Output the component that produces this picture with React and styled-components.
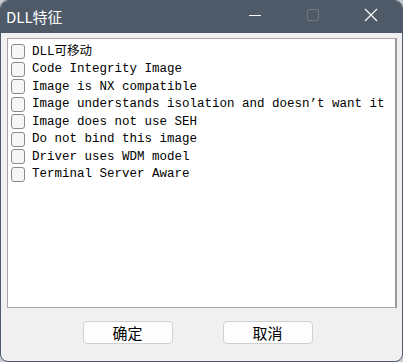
import styled, { createGlobalStyle } from "styled-components";
import { useState } from "react";

const GlobalStyle = createGlobalStyle`
  html, body {
    margin: 0;
    padding: 0;
    background: #c8ccd0;
  }
`;

const flags = [
  "DLL可移动",
  "Code Integrity Image",
  "Image is NX compatible",
  "Image understands isolation and doesn\u2019t want it",
  "Image does not use SEH",
  "Do not bind this image",
  "Driver uses WDM model",
  "Terminal Server Aware",
];

const App = () => {
  const [checked, setChecked] = useState(flags.map(() => false));

  const toggle = (i) => {
    setChecked(checked.map((c, j) => (j === i ? !c : c)));
  };

  return (
    <>
      <GlobalStyle />
      <Window>
        <TitleBar>
          <Title>DLL特征</Title>
          <Controls>
            <CtrlButton>
              <svg width="14" height="14" viewBox="0 0 14 14">
                <line x1="1" y1="7.5" x2="13" y2="7.5" stroke="#fff" strokeWidth="1" />
              </svg>
            </CtrlButton>
            <CtrlButton>
              <svg width="14" height="14" viewBox="0 0 14 14">
                <rect x="1.5" y="1.5" width="11" height="11" rx="1.5" fill="none" stroke="#6e7886" strokeWidth="1" />
              </svg>
            </CtrlButton>
            <CtrlButton>
              <svg width="14" height="14" viewBox="0 0 14 14">
                <path d="M1 1 L13 13 M13 1 L1 13" stroke="#fff" strokeWidth="1.1" />
              </svg>
            </CtrlButton>
          </Controls>
        </TitleBar>
        <Body>
          <ListBox>
            {flags.map((f, i) => (
              <Row key={f} onClick={() => toggle(i)}>
                <Box $on={checked[i]} />
                <Label>{f}</Label>
              </Row>
            ))}
          </ListBox>
          <ButtonRow>
            <DlgButton>确定</DlgButton>
            <DlgButton>取消</DlgButton>
          </ButtonRow>
        </Body>
      </Window>
    </>
  );
};
export default App;

const Window = styled.div`
  width: 403px;
  height: 362px;
  box-sizing: border-box;
  border: 1px solid #4f5a68;
  border-radius: 8px;
  overflow: hidden;
  background: #f0f0f0;
  display: flex;
  flex-direction: column;
`;

const TitleBar = styled.div`
  height: 32px;
  background: #4f5a68;
  display: flex;
  align-items: center;
  justify-content: space-between;
  padding-left: 5px;
  flex-shrink: 0;
`;

const Title = styled.div`
  color: #fff;
  font-family: "Noto Sans CJK SC", sans-serif;
  font-size: 15px;
  line-height: 1;
  margin-top: -1px;
`;

const Controls = styled.div`
  display: flex;
  height: 100%;
  margin-right: 2px;
`;

const CtrlButton = styled.div`
  width: 58px;
  height: 100%;
  display: flex;
  align-items: center;
  justify-content: center;
  margin-top: -2px;
`;

const Body = styled.div`
  flex: 1;
  display: flex;
  flex-direction: column;
  padding: 5px 5px 0 6px;
`;

const ListBox = styled.div`
  height: 270px;
  box-sizing: border-box;
  background: #fff;
  border: 1px solid #a8a8a8;
  border-right: 2px solid #9a9a9a;
  padding: 4px 3px 3px;
`;

const Row = styled.div`
  height: 17.5px;
  display: flex;
  align-items: center;
  gap: 7px;
  cursor: default;
`;

const Box = styled.div`
  width: 14px;
  height: 15px;
  box-sizing: border-box;
  border: 1px solid #8a8a8a;
  border-radius: 3px;
  background: ${(p) => (p.$on ? "#4f5a68" : "#f6f6f6")};
  flex-shrink: 0;
`;

const Label = styled.span`
  font-family: "Liberation Mono", "Noto Sans CJK SC", monospace;
  font-size: 12.5px;
  color: #000;
  white-space: nowrap;
  line-height: 1;
`;

const ButtonRow = styled.div`
  display: flex;
  justify-content: center;
  gap: 50px;
  margin-top: 13px;
  padding-right: 9px;
`;

const DlgButton = styled.button`
  width: 90px;
  height: 23px;
  background: #fdfdfd;
  border: 1px solid #d0d0d0;
  border-radius: 4px;
  font-family: "Noto Sans CJK SC", sans-serif;
  font-size: 15px;
  color: #000;
  padding: 0;
  line-height: 1;
  cursor: pointer;
`;
